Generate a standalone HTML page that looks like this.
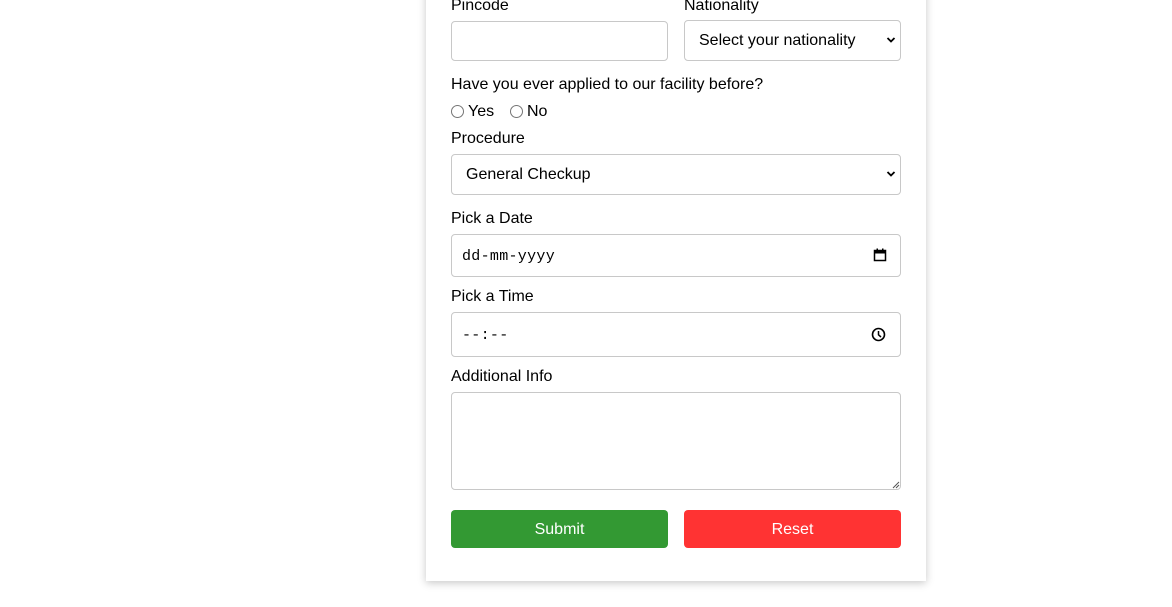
<!DOCTYPE html>
<html><head><meta charset="utf-8"><style>
*{box-sizing:border-box;margin:0;padding:0}
html,body{width:1172px;height:607px;background:#fff;overflow:hidden;font-family:"Liberation Sans",Arial,sans-serif;color:#000;position:relative}
.card{position:absolute;left:426px;top:-20px;width:500px;height:601px;background:#fff;box-shadow:0 2px 8px rgba(0,0,0,0.22)}
.a{position:absolute}
.lbl{position:absolute;font-size:16px;line-height:18px;white-space:nowrap;margin-top:1px}
.box{position:absolute;border:1px solid #c8c8c8;border-radius:4px;background:#fff}
.txt{position:absolute;font-size:16px;line-height:18px;white-space:nowrap;margin-top:1px}
.mono{font-family:"Liberation Mono","DejaVu Sans Mono",monospace;font-size:15px;letter-spacing:0.3px}
.radio{position:absolute;width:13px;height:13px;border:1px solid #767676;border-radius:50%;background:#fff}
.btn{position:absolute;border-radius:4px;color:#fff;font-size:16px;text-align:center;line-height:38px;padding-top:1px}
</style></head><body>
<div class="card"></div>
<div class="lbl" style="left:451px;top:-4px">Pincode</div>
<div class="lbl" style="left:684px;top:-4px">Nationality</div>
<div class="box" style="left:451px;top:21px;width:217px;height:40px"></div>
<div class="box" style="left:684px;top:20px;width:217px;height:41px"></div>
<div class="txt" style="left:699px;top:31px">Select your nationality</div>
<svg class="a" style="left:886px;top:36px" width="10" height="8" viewBox="0 0 10 8"><path d="M1.5 2 L5 5.5 L8.5 2" fill="none" stroke="#000" stroke-width="1.8"/></svg>
<div class="lbl" style="left:451px;top:75px">Have you ever applied to our facility before?</div>
<div class="radio" style="left:451px;top:105px"></div>
<div class="txt" style="left:468px;top:102px">Yes</div>
<div class="radio" style="left:510px;top:105px"></div>
<div class="txt" style="left:527px;top:102px">No</div>
<div class="lbl" style="left:451px;top:129px">Procedure</div>
<div class="box" style="left:451px;top:154px;width:450px;height:41px"></div>
<div class="txt" style="left:466px;top:165px">General Checkup</div>
<svg class="a" style="left:886px;top:170px" width="10" height="8" viewBox="0 0 10 8"><path d="M1.5 2 L5 5.5 L8.5 2" fill="none" stroke="#000" stroke-width="1.8"/></svg>
<div class="lbl" style="left:451px;top:209px">Pick a Date</div>
<div class="box" style="left:451px;top:234px;width:450px;height:43px"></div>
<div class="txt mono" style="left:462px;top:247px">dd-mm-yyyy</div>
<svg class="a" style="left:873px;top:248px" width="14" height="14" viewBox="0 0 14 14"><rect x="1.5" y="2.5" width="11" height="10" fill="none" stroke="#000" stroke-width="1.5"/><rect x="1.5" y="2.5" width="11" height="3" fill="#000"/><rect x="3.5" y="0.5" width="1.5" height="2.5" fill="#000"/><rect x="9" y="0.5" width="1.5" height="2.5" fill="#000"/></svg>
<div class="lbl" style="left:451px;top:287px">Pick a Time</div>
<div class="box" style="left:451px;top:312px;width:450px;height:45px"></div>
<div class="txt mono" style="left:462px;top:326px">--:--</div>
<svg class="a" style="left:871px;top:327px" width="15" height="15" viewBox="0 0 15 15"><circle cx="7.5" cy="7.5" r="6" fill="none" stroke="#000" stroke-width="1.6"/><path d="M7.5 4 V7.8 L10 10" fill="none" stroke="#000" stroke-width="1.5"/></svg>
<div class="lbl" style="left:451px;top:367px">Additional Info</div>
<div class="box" style="left:451px;top:392px;width:450px;height:98px"></div>
<svg class="a" style="left:891px;top:480px" width="9" height="9" viewBox="0 0 9 9"><path d="M8 2 L2 8 M8 5 L5 8" stroke="#555" stroke-width="1"/></svg>
<div class="btn" style="left:451px;top:510px;width:217px;height:38px;background:#339933">Submit</div>
<div class="btn" style="left:684px;top:510px;width:217px;height:38px;background:#ff3333">Reset</div>
</body></html>
